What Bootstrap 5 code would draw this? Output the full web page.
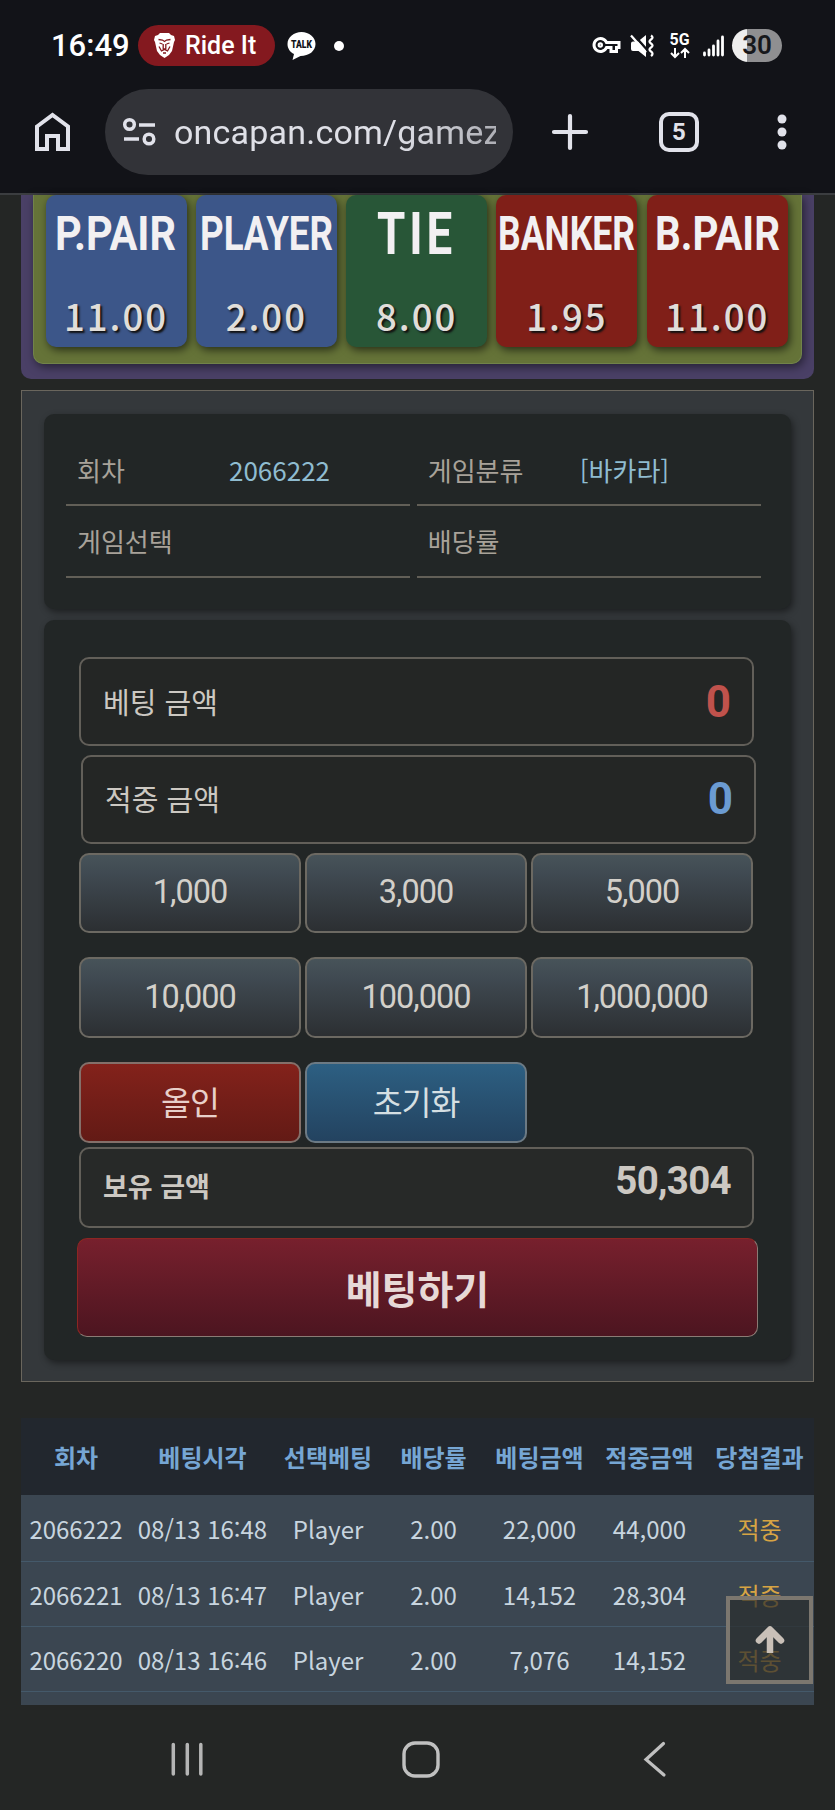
<!DOCTYPE html>
<html lang="ko">
<head>
<meta charset="utf-8">
<meta name="viewport" content="width=device-width, initial-scale=1">
<title>oncapan</title>
<link href="https://cdn.jsdelivr.net/npm/bootstrap@5.3.0/dist/css/bootstrap.min.css" rel="stylesheet">
<style>
html{background:#242625}
body{width:835px;height:1810px;overflow:hidden;background:#242625;font-family:"Noto Sans CJK KR",sans-serif;color:#ccc8c2;line-height:1.2}
svg{display:block;flex:none;overflow:visible}
.chrome{height:195px;background:#121318;border-bottom:2px solid #3b3d40;font-family:Roboto,sans-serif}
.status{height:89px;padding:2px 53px 0 51px;color:#fff}
.clock{width:78px;font-size:31px;font-weight:500;line-height:40px;margin-right:9px;white-space:nowrap}
.ride{width:137px;height:41px;border-radius:21px;background:#84191f;padding-left:16px;gap:10px;font-size:25px;font-weight:500;margin-right:12px;white-space:nowrap}
.dot{width:10px;height:10px;margin-left:18px}
.battery{width:50px;height:33px;border-radius:17px;background:linear-gradient(90deg,#eee 0 15px,#8f8f91 15px);color:#17181c;font-size:26px;font-weight:600}
.tools{height:86px;padding-left:34px}
.omni{width:408px;height:86px;border-radius:43px;background:#323338;margin-left:33px;padding-left:17px}
.url{width:322px;margin-left:18px;overflow:hidden;white-space:nowrap;font-size:34px;letter-spacing:.2px;color:#dfe0e7;line-height:48px;-webkit-mask-image:linear-gradient(90deg,#000 68%,rgba(0,0,0,.72))}
.tabs{width:40px;height:40px;border:4px solid #e1e2ea;border-radius:10px;color:#e1e2ea;font-size:24px;font-weight:700;line-height:32px}
.board{margin:0 21px;height:184px;padding:0 12px 15px;background:#4a4066;border-radius:0 0 10px 10px}
.felt{height:169px;background:#657338;border:1px solid #71834a;border-top:0;border-radius:0 0 10px 10px;padding:0 12px 0 11.5px;gap:9.3px;box-shadow:2px 3px 10px rgba(0,0,0,.5)}
.bet{width:141px;height:152px;border-radius:10px;box-shadow:2px 3px 8px rgba(0,0,0,.6);color:#e0ddd9;flex:none}
.bet.blue{background:#3c5689}.bet.green{background:#285637}.bet.red{background:#801f18}
.bet text{font-family:Roboto,sans-serif;font-weight:700;fill:#f2f0f2}
.odds{font-size:36.5px;font-weight:500;letter-spacing:2px;line-height:40px;margin-top:31px;text-align:center;text-shadow:2px 2px 2px #111}
.slip{margin:11px 21px 0;height:992px;border:1.5px solid #6a665d;background:#34383b;padding:23px 22px}
.panel{background:#222626;border-radius:10px;box-shadow:2px 3px 7px rgba(0,0,0,.45);width:747px}
.info{height:195px;padding:21px 30px 0 22px;gap:0 6.5px;display:grid;grid-template-columns:1fr 1fr;align-content:start}
.cellx{height:71.3px;border-bottom:2px solid #625f57;font-size:26px;color:#a8a299;padding:0 0 0 11px}
.cellx b{font-weight:400;color:#8fbcd0;width:152px}
.cellx span{width:152px}
.form{margin-top:11px;height:740px;padding:37px 33px 0 35px}
.field{width:675px;height:89px;border:2px solid #625f59;border-radius:10px;background:#242625;padding:0 21px 1px 22px;font-size:29px}
.num{font-family:Roboto,sans-serif;font-weight:700;font-size:44px;padding-top:2px}
.chips{display:grid;grid-template-columns:repeat(3,222px);column-gap:4px;row-gap:24.6px;margin-top:9px}
.chips .btn{height:80.3px;border:2px solid #6c6962;border-radius:10px;padding:0 0 1px;background:linear-gradient(#48545a,#404a52 25%,#2b2e31) border-box;font:400 32.5px Roboto,"Noto Sans CJK KR",sans-serif;letter-spacing:-1px;color:#d3d0ca}
.chips .allin{background:linear-gradient(#84221b,#621a15) border-box;border-color:#84706a;color:#e8cfca;padding-bottom:4px}
.chips .reset{background:linear-gradient(#2d6083,#23425f) border-box;border-color:#6c7a84;color:#d5dfe2;padding-bottom:4px}
.go{width:681px;height:99px;margin:10px 0 0 -2px;border-radius:10px;border:1.5px solid;border-color:#8c2622 #8b7b74 #8b7b74 #8c2622;background:linear-gradient(#77202d,#4c1520);color:#e7d9d7;font-size:39px;font-weight:700;padding:0}
.history{margin:36px 21px 0;width:793px;height:287px;overflow:hidden}
.history table{width:793px;table-layout:fixed;font-size:24px;text-align:center;color:#c8d5df;background:#3b4651;border-collapse:collapse;white-space:nowrap}
.history th{height:77px;background:#22272e;color:#76a6d4;font-weight:700;padding:2px 0 0;text-align:center}
.history td{height:65px;padding:4px 0 0;border-bottom:1.5px solid #44596a}
.history tr:nth-child(1) td{height:66px}
.history .hit{color:#d7a444}
.totop{position:absolute;left:726px;top:1596px;width:87px;height:88px;border:4px solid #7c776f;background:rgba(42,44,44,.7)}
.sys{height:105px}
</style>
</head>
<body class="m-0 position-relative">
<header class="chrome">
  <div class="status d-flex align-items-center">
    <span class="clock">16:49</span>
    <div class="ride d-flex align-items-center">
      <svg width="21" height="25" viewBox="0 0 21 25"><path fill="#fff" d="M6 0h9l2 2 3 1 1 4-1 2-2 9-3 4-4.500 3L6 22l-3-4L1 9 0 7l1-4 3-1z"/><g fill="none" stroke="#84191f" stroke-width="1.300"><path d="M4.500 6.500l4 .5 2 1.500 2-1.500 4-.5M5.500 10l3 1M15.500 10l-3 1M9.200 11v5h2.600v-5M5 13.500l2.500 4.500 3-1.500 3 1.500 2.500-4.500M9 20h3"/></g></svg>
      <span>Ride It</span>
    </div>
    <svg width="29" height="28" viewBox="0 0 29 28"><path fill="#fff" d="M14.500 0C22 0 28.500 5 28.500 12S22 24 13.500 24L5.500 28 7 22C3 20 .5 16.500.5 12 .5 5 7 0 14.500 0z"/><text x="4" y="16" font-family="Roboto" font-weight="900" font-size="10" textLength="21" lengthAdjust="spacingAndGlyphs" fill="#121318">TALK</text></svg>
    <span class="dot rounded-circle bg-white"></span>
    <div class="d-flex align-items-center ms-auto">
      <svg width="29" height="17" viewBox="0 0 29 17" fill="none" stroke="#fff" stroke-width="3"><path d="M14.500 5.500H27V10.500H24.500V14.500H19V10.500H14.500A6.500 6.500 0 1 1 14.500 5.500Z"/><circle cx="8.300" cy="8" r="1.600" stroke-width="2.200"/></svg>
      <svg class="ms-2" width="26" height="24" viewBox="0 0 26 24"><path fill="#fff" d="M4 7.500h5L17 1v22l-7.500-6H4q-2 0-2-2v-5.500q0-2 2-2z"/><path d="M4 0l16 18" stroke="#121318" stroke-width="2.500"/><path d="M2 1.500l15 17" stroke="#fff" stroke-width="2.300"/><path d="M22 1.500q3 2 0 4t0 4q3 2 0 4t0 4q3 2 0 4.500" fill="none" stroke="#fff" stroke-width="2.300"/></svg>
      <svg style="margin-left:14px" width="22" height="28" viewBox="0 0 22 28"><text x="0.500" y="13" font-family="Roboto" font-weight="700" font-size="16" textLength="20" lengthAdjust="spacingAndGlyphs" fill="#fff">5G</text><path d="M6 16v9M2 21l4 4 4-4M16 26v-9M12 21l4-4 4 4" fill="none" stroke="#fff" stroke-width="2"/></svg>
      <svg style="margin-left:12px" width="21" height="22" viewBox="0 0 21 22" stroke="#fff" stroke-width="2.800" stroke-linecap="round"><path d="M1.500 18v2M6 15v5M10.500 11v9M15 6v14M19.500 2v18"/></svg>
      <div class="battery d-flex align-items-center justify-content-center" style="margin-left:8px">30</div>
    </div>
  </div>
  <div class="tools d-flex align-items-center">
    <svg width="38" height="40" viewBox="0 0 38 40"><path d="M3 14.500 18.500 3 34 14.500V37H24V24H13V37H3z" fill="none" stroke="#e1e2ea" stroke-width="4"/></svg>
    <div class="omni d-flex align-items-center">
      <svg width="34" height="30" viewBox="0 0 34 30" fill="none" stroke="#e1e2ea" stroke-width="3.500"><circle cx="7.500" cy="7.500" r="4.800"/><path d="M17 8H33M2 22H17"/><circle cx="27" cy="22" r="4.800"/></svg>
      <div class="url">oncapan.com/gamez</div>
    </div>
    <svg style="margin-left:39px" width="36" height="36" viewBox="0 0 36 36"><path d="M18 2v32M2 18h32" stroke="#e1e2ea" stroke-width="4.200" stroke-linecap="round"/></svg>
    <div class="tabs text-center" style="margin-left:71px">5</div>
    <svg style="margin-left:78px" width="10" height="36" viewBox="0 0 10 36" fill="#e1e2ea"><circle cx="5" cy="5" r="4.500"/><circle cx="5" cy="18" r="4.500"/><circle cx="5" cy="31" r="4.500"/></svg>
  </div>
</header>
<main>
  <section class="board">
    <div class="felt d-flex">
      <div class="bet blue"><svg width="141" height="70"><text x="9" y="55" font-size="48.500" textLength="121" lengthAdjust="spacingAndGlyphs">P.PAIR</text></svg><div class="odds">11.00</div></div>
      <div class="bet blue"><svg width="141" height="70"><text x="4" y="55" font-size="48.500" textLength="133" lengthAdjust="spacingAndGlyphs">PLAYER</text></svg><div class="odds">2.00</div></div>
      <div class="bet green"><svg width="141" height="70"><text x="31" y="59" font-size="59" letter-spacing="5" textLength="79" lengthAdjust="spacingAndGlyphs">TIE</text></svg><div class="odds">8.00</div></div>
      <div class="bet red"><svg width="141" height="70"><text x="2" y="55" font-size="48.500" textLength="137" lengthAdjust="spacingAndGlyphs">BANKER</text></svg><div class="odds">1.95</div></div>
      <div class="bet red"><svg width="141" height="70"><text x="8" y="55" font-size="48.500" textLength="125" lengthAdjust="spacingAndGlyphs">B.PAIR</text></svg><div class="odds">11.00</div></div>
    </div>
  </section>
  <section class="slip">
    <div class="panel info">
      <div class="cellx d-flex align-items-center"><span>회차</span><b>2066222</b></div>
      <div class="cellx d-flex align-items-center"><span>게임분류</span><b>[바카라]</b></div>
      <div class="cellx d-flex align-items-center"><span>게임선택</span></div>
      <div class="cellx d-flex align-items-center"><span>배당률</span></div>
    </div>
    <div class="panel form">
      <div class="field d-flex align-items-center justify-content-between"><span>베팅 금액</span><span class="num" style="color:#c0524c">0</span></div>
      <div class="field d-flex align-items-center justify-content-between" style="margin:8.500px 0 0 2px"><span>적중 금액</span><span class="num" style="color:#6b9bd2">0</span></div>
      <div class="chips">
        <button class="btn">1,000</button><button class="btn">3,000</button><button class="btn">5,000</button>
        <button class="btn">10,000</button><button class="btn">100,000</button><button class="btn">1,000,000</button>
        <button class="btn allin">올인</button><button class="btn reset">초기화</button>
      </div>
      <div class="field d-flex align-items-center justify-content-between fw-bold" style="height:81px;margin-top:4px;font-size:27px;background:#272928"><span>보유 금액</span><span class="num" style="font-size:38.500px;letter-spacing:-.7px;padding:0 0 10px">50,304</span></div>
      <button class="btn go d-block">베팅하기</button>
    </div>
  </section>
  <section class="history">
    <table>
      <colgroup><col style="width:110px"><col style="width:143px"><col style="width:108px"><col style="width:103px"><col style="width:109px"><col style="width:111px"><col style="width:109px"></colgroup>
      <thead><tr><th>회차</th><th>베팅시각</th><th>선택베팅</th><th>배당률</th><th>베팅금액</th><th>적중금액</th><th>당첨결과</th></tr></thead>
      <tbody>
        <tr><td>2066222</td><td>08/13 16:48</td><td>Player</td><td>2.00</td><td>22,000</td><td>44,000</td><td class="hit">적중</td></tr>
        <tr><td>2066221</td><td>08/13 16:47</td><td>Player</td><td>2.00</td><td>14,152</td><td>28,304</td><td class="hit">적중</td></tr>
        <tr><td>2066220</td><td>08/13 16:46</td><td>Player</td><td>2.00</td><td>7,076</td><td>14,152</td><td class="hit">적중</td></tr>
        <tr><td></td><td></td><td></td><td></td><td></td><td></td><td></td></tr>
      </tbody>
    </table>
  </section>
</main>
<a class="totop d-flex align-items-center justify-content-center" href="#"><svg width="30" height="30" viewBox="0 0 30 30" fill="none" stroke="#c9c0b8" stroke-width="6.500"><path d="M15 28V6"/><path stroke-linecap="round" stroke-linejoin="round" d="M4 15.500 15 4.500 26 15.500"/></svg></a>
<nav class="sys d-flex" aria-label="system">
  <svg style="margin:37px 0 0 171px" width="33" height="35" stroke="#b5b5b5" stroke-width="3.500" stroke-linecap="round"><path d="M2.300 2.500V32M16.300 2.500V32M29.800 2.500V32"/></svg>
  <svg style="margin:36px 0 0 198px" width="38" height="37" fill="none" stroke="#c0c0c0" stroke-width="3.400"><rect x="2" y="2" width="34" height="33" rx="11"/></svg>
  <svg style="margin:36px 0 0 202px" width="26" height="37" fill="none" stroke="#c0c0c0" stroke-width="3.200" stroke-linecap="round"><path d="M21.500 2.500 4 18.500 22 34"/></svg>
</nav>
<script src="https://cdn.jsdelivr.net/npm/bootstrap@5.3.0/dist/js/bootstrap.bundle.min.js"></script>
</body>
</html>
